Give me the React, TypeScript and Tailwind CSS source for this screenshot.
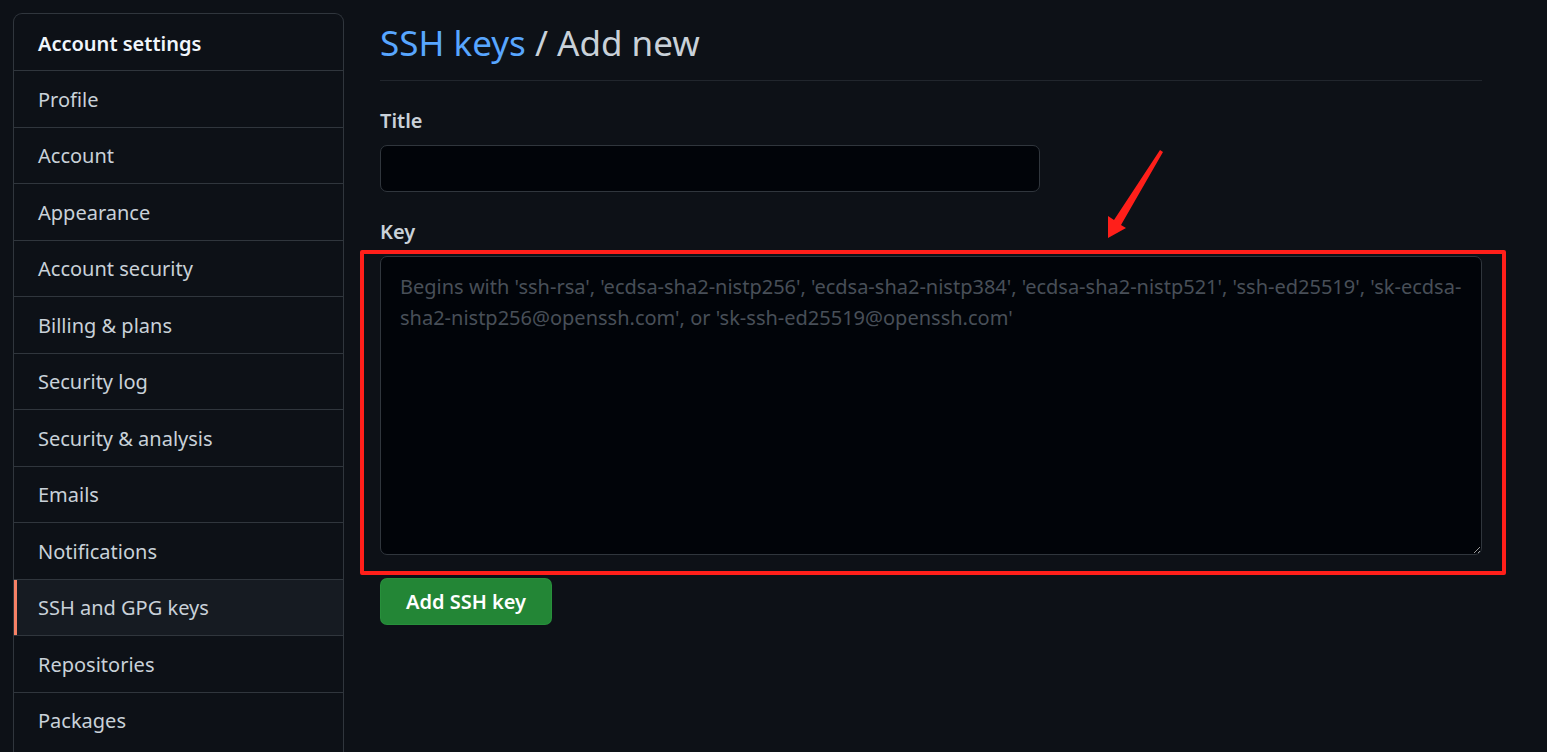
const navItems = [
  "Profile",
  "Account",
  "Appearance",
  "Account security",
  "Billing & plans",
  "Security log",
  "Security & analysis",
  "Emails",
  "Notifications",
  "SSH and GPG keys",
  "Repositories",
  "Packages",
];

const Sidebar = () => {
  return (
    <nav className="w-[331px] shrink-0 rounded-t-[9px] border border-[#30363d] border-b-0">
      <div className="flex h-[56px] items-center px-6 pt-[3px] text-[20px] font-semibold text-[#f0f6fc]">
        Account settings
      </div>
      {navItems.map((item) => {
        const active = item === "SSH and GPG keys";
        return (
          <div
            key={item}
            className={
              active
                ? "relative flex h-[56.5px] items-center border-t border-[#30363d] bg-[#161b22] px-6 pt-[2px] text-[20px] text-[#c9d1d9]"
                : "relative flex h-[56.5px] items-center border-t border-[#30363d] px-6 pt-[2px] text-[20px] text-[#c9d1d9]"
            }
          >
            {active && <span className="absolute left-0 top-0 h-full w-[3px] bg-[#f78166]" />}
            {item}
          </div>
        );
      })}
    </nav>
  );
};

const App = () => {
  return (
    <div
      className="relative flex h-[752px] gap-[36px] overflow-hidden bg-[#0d1117] pl-[13px] pt-[13px]"
      style={{ fontFamily: '"Noto Sans", sans-serif' }}
    >
      <Sidebar />

      <main className="w-[1102px]">
        {/* header */}
        <div className="border-b border-[#21262d] pb-[9px] pt-[2px]">
          <h1 className="text-[35px] leading-[56px] text-[#c9d1d9]">
            <span className="text-[#58a6ff]">SSH keys</span> / Add new
          </h1>
        </div>

        <div className="pt-[25px]">
          <label className="block text-[20px] font-semibold leading-[30px] text-[#c9d1d9]">Title</label>
          <input
            type="text"
            className="mt-[9px] block h-[47px] w-[660px] rounded-[7px] border border-[#30363d] bg-[#010409] px-4 text-[20px] text-[#c9d1d9] outline-none"
          />

          <label className="mt-[25px] block text-[20px] font-semibold leading-[30px] text-[#c9d1d9]">Key</label>
          <textarea
            className="mt-[9px] block h-[299px] w-full resize-y rounded-[7px] border border-[#30363d] bg-[#010409] px-[19px] py-[14px] text-[20px] leading-[31px] text-[#c9d1d9] outline-none placeholder:text-[#484f58]"
            placeholder="Begins with 'ssh-rsa', 'ecdsa-sha2-nistp256', 'ecdsa-sha2-nistp384', 'ecdsa-sha2-nistp521', 'ssh-ed25519', 'sk-ecdsa-sha2-nistp256@openssh.com', or 'sk-ssh-ed25519@openssh.com'"
          />

          <button className="mt-[23px] h-[47px] rounded-[7px] border border-[#2ea043]/40 bg-[#238636] px-[25px] text-[20px] font-semibold text-white">
            Add SSH key
          </button>
        </div>
      </main>

      {/* annotation: red box around key field */}
      <div className="pointer-events-none absolute left-[360px] top-[250px] h-[325px] w-[1146px] rounded-[2px] border-[4px] border-[#ff1f1a]" />

      {/* annotation: arrow */}
      <svg className="pointer-events-none absolute left-0 top-0" width="1547" height="752">
        <polygon
          points="1160,150 1163,152 1121,225 1126,228 1108,238 1108,216 1114,220"
          fill="#ff1f1a"
        />
      </svg>
    </div>
  );
};

export default App;
